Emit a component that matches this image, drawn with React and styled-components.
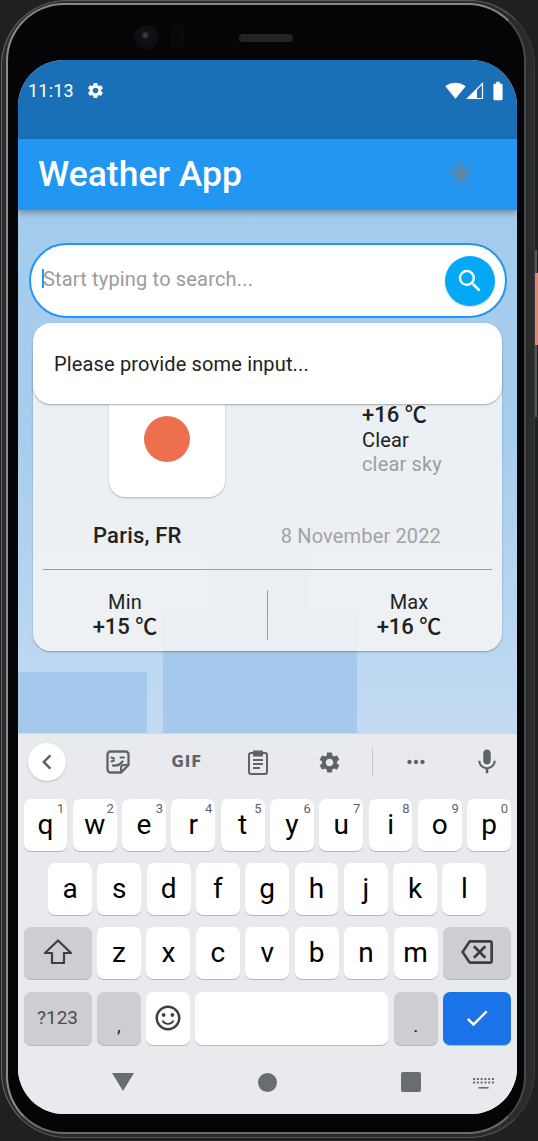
import styled, { createGlobalStyle } from 'styled-components';
import {
  MdSettings, MdSearch, MdSignalWifi4Bar, MdBatteryFull, MdWbSunny, MdChevronLeft,
  MdMic, MdMoreHoriz, MdOutlineBackspace, MdCheck, MdOutlineSentimentSatisfiedAlt,
} from 'react-icons/md';

const GlobalStyle = createGlobalStyle`
  html, body {
    margin: 0;
    background: #1f2021;
    overflow: hidden;
  }
  * { box-sizing: border-box; }
`;

const Page = styled.div`
  width: 538px;
  height: 1141px;
  position: relative;
  overflow: hidden;
  padding: 0 3px 3px 1px;
  font-family: Roboto, "Noto Sans CJK SC", sans-serif;
`;

const Shell = styled.div`
  height: 1138px;
  background: #2a2b2d;
  border: 1px solid;
  border-color: #5c5d60 #3a3b3d #55565a #66676a;
  border-radius: 66px;
  padding: 2px 8px 3px 4px;
`;

const Bezel = styled.div`
  height: 100%;
  background: #050507;
  border: 2px solid;
  border-color: #85868a #47484b #6a6b6e #8a8b8e;
  border-radius: 58px;
  padding: 0 7px 0 10px;
  display: flex;
  flex-direction: column;
`;

const Notch = styled.div`
  height: 55px;
  flex: none;
  display: flex;
  align-items: center;
  padding: 10px 0 0 116px;
`;

const Camera = styled.div`
  width: 25px;
  height: 25px;
  border-radius: 50%;
  background: radial-gradient(circle at 45% 40%, #3a3c4c 0 1.5px, #111217 4px, #0a0a0e 100%);
  border: 1px solid #0f0f13;
`;

const Sensor = styled.div`
  width: 12px;
  height: 25px;
  margin-left: 12px;
  border-radius: 5px;
  background: #08080b;
  border: 1px solid #0e0e11;
`;

const Speaker = styled.div`
  width: 54px;
  height: 8px;
  margin-left: 56px;
  border-radius: 4px;
  background: repeating-linear-gradient(90deg, #262628 0 2px, #1d1d1f 2px 3px);
`;

const SideRail = styled.div`
  position: absolute;
  right: 1px;
  top: 250px;
  width: 2px;
  height: 167px;
  background: #55565a;
`;

const SideButton = styled.div`
  position: absolute;
  right: 0;
  top: 273px;
  width: 3px;
  height: 72px;
  background: #e8826a;
`;

const Screen = styled.div`
  flex: 1;
  min-height: 0;
  display: flex;
  flex-direction: column;
  border-radius: 46px;
  overflow: hidden;
  margin-bottom: 18px;
  background: #e8eaed;
`;

const StatusBar = styled.div`
  height: 79px;
  flex: none;
  background: #1a70b7;
  color: #fff;
  display: flex;
  align-items: center;
  padding: 0 8px 18px 10px;
  font-size: 18px;
  letter-spacing: 0.2px;
  svg { display: block; }
`;

const StatusIcons = styled.div`
  margin-left: auto;
  display: flex;
  align-items: center;
`;

const AppBar = styled.header`
  height: 71px;
  flex: none;
  background: #2196f3;
  display: flex;
  align-items: center;
  justify-content: space-between;
  padding: 0 41px 2px 20px;
  box-shadow: 0 3px 6px rgba(0, 0, 0, 0.3);
  position: relative;
  z-index: 2;
`;

const Title = styled.h1`
  margin: 0;
  color: #fff;
  font-size: 35.5px;
  font-weight: 500;
`;

const Body = styled.main`
  flex: 1;
  min-height: 0;
  padding: 33px 0 0;
  background:
    linear-gradient(#a5c9ed, #a5c9ed) 0 462px / 129px 61px no-repeat,
    linear-gradient(#a5c9ed, #a5c9ed) 145px 400px / 194px 123px no-repeat,
    linear-gradient(#a9ccee, #a9ccee) 187px 280px / 105px 120px no-repeat,
    linear-gradient(180deg, #a3cbec 0%, #a8ceee 45%, #bcd7f0 85%, #c3dbf2 100%);
`;

const SearchWrap = styled.div`
  position: relative;
  margin: 0 10px 0 11px;
`;

const SearchField = styled.div`
  height: 75px;
  background: #fff;
  border: 2.5px solid #2196f3;
  border-radius: 38px;
  display: flex;
  align-items: center;
  padding: 0 10px 0 11px;
`;

const Cursor = styled.span`
  width: 2px;
  height: 19px;
  margin-bottom: 4px;
  background: #2196f3;
  flex: none;
  margin-right: -1px;
`;

const Placeholder = styled.span`
  font-size: 20px;
  letter-spacing: 0.17px;
  margin-bottom: 4px;
  color: #9b9b9b;
  flex: 1;
`;

const SearchButton = styled.button`
  width: 50px;
  height: 50px;
  border: none;
  border-radius: 50%;
  background: #03a9f4;
  color: #fff;
  display: flex;
  align-items: center;
  justify-content: center;
  padding: 0;
  box-shadow: 0 1px 2px rgba(0, 0, 0, 0.2);
`;

const Suggestion = styled.div`
  position: absolute;
  left: 4px;
  right: 5px;
  top: 80px;
  height: 81px;
  background: #fff;
  border-radius: 18px;
  display: flex;
  align-items: center;
  padding-left: 21px;
  font-size: 20px;
  letter-spacing: 0.15px;
  color: #212121;
  box-shadow: 0 1px 2px rgba(0, 0, 0, 0.3);
  z-index: 1;
`;

const WeatherCard = styled.section`
  margin: 22px 15px 0;
  height: 311px;
  background: rgba(245, 245, 245, 0.87);
  border-radius: 18px;
  box-shadow: 0 1px 2px rgba(0, 0, 0, 0.3);
  color: #212121;
`;

const TopRow = styled.div`
  height: 157px;
  display: flex;
  align-items: flex-end;
  gap: 137px;
  padding-left: 76px;
`;

const ImageBox = styled.div`
  width: 116px;
  height: 147px;
  background: #fff;
  border-radius: 16px;
  box-shadow: 0 1px 2px rgba(0, 0, 0, 0.25);
  display: flex;
  align-items: flex-end;
  justify-content: center;
  padding-bottom: 35px;
`;

const SunDot = styled.div`
  width: 46px;
  height: 46px;
  border-radius: 50%;
  background: #ee6f4d;
  filter: blur(0.7px);
`;

const Conditions = styled.div`
  display: flex;
  flex-direction: column;
  padding-bottom: 21px;
`;

const Temp = styled.div`
  font-size: 22px;
  font-weight: 500;
  line-height: 26px;
  white-space: nowrap;
`;

const Line = styled.div`
  font-size: 20px;
  letter-spacing: 0.15px;
  line-height: 24px;
  color: ${(p) => (p.$muted ? '#9e9e9e' : '#212121')};
`;

const PlaceRow = styled.div`
  height: 72px;
  padding: 27px 61px 0 60px;
  display: flex;
  justify-content: space-between;
`;

const Place = styled.div`
  font-size: 22px;
  font-weight: 500;
  letter-spacing: 0.2px;
  line-height: 24px;
`;

const DateText = styled.div`
  font-size: 20px;
  letter-spacing: 0.15px;
  line-height: 24px;
  color: #a3a3a3;
`;

const Divider = styled.div`
  height: 1px;
  margin: 0 10px;
  background: #52b4e6;
`;

const StatsRow = styled.div`
  display: flex;
  justify-content: space-between;
  padding: 20px 61px 0 60px;
`;

const Stat = styled.div`
  width: 64px;
  display: flex;
  flex-direction: column;
  align-items: center;
  white-space: nowrap;
`;

const VLine = styled.div`
  width: 1px;
  height: 50px;
  background: #52b4e6;
`;

const Keyboard = styled.div`
  height: 380px;
  flex: none;
  background: #e8eaed;
  position: relative;
`;

const Toolbar = styled.div`
  height: 65px;
  padding: 0 0 9px 10px;
  display: grid;
  grid-template-columns: 38px 104px 34px 108px 34px 52px 36px 83px;
  align-items: center;
  color: #5f6368;
`;

const BackButton = styled.div`
  width: 38px;
  height: 38px;
  border-radius: 50%;
  background: #fff;
  box-shadow: 0 1px 2px rgba(0, 0, 0, 0.2);
  display: flex;
  align-items: center;
  justify-content: center;
`;

const Tool = styled.div`
  display: flex;
  justify-content: center;
  align-items: center;
  justify-self: ${(p) => (p.$end ? 'end' : 'center')};
  width: ${(p) => (p.$end ? '60px' : 'auto')};
`;

const GifLabel = styled.span`
  font-family: "DejaVu Sans", sans-serif;
  font-weight: 700;
  font-size: 15px;
  letter-spacing: 1px;
`;

const Separator = styled.div`
  width: 1px;
  height: 28px;
  background: #c6c8cc;
`;

const Keys = styled.div`
  display: flex;
  flex-direction: column;
  gap: 12px;
  padding: 0 6px 0 5.5px;
`;

const KeyRow = styled.div`
  display: flex;
  gap: 5.4px;
  height: ${(p) => (p.$last ? '53px' : '52px')};
  margin-top: ${(p) => (p.$last ? '1px' : '0')};
  padding: 0 ${(p) => (p.$inset ? '24.6px' : '0')};
`;

const Key = styled.div`
  position: relative;
  flex: ${(p) => (p.$w ? `0 0 ${p.$w}px` : '1 1 0')};
  min-width: 0;
  border-radius: 7px;
  background: ${(p) => (p.$primary ? '#1a73e8' : p.$alt ? '#ccced3' : '#fff')};
  color: ${(p) => (p.$primary ? '#fff' : p.$alt ? '#3c4043' : '#000')};
  box-shadow: 0 1px 0 #b4b7bc;
  display: flex;
  align-items: center;
  justify-content: center;
  font-size: 28px;
  padding-bottom: 2px;
`;

const Hint = styled.span`
  position: absolute;
  top: 2px;
  right: 3px;
  font-size: 13px;
  color: #5f6368;
`;

const SymbolLabel = styled.span`
  font-size: 19px;
  color: #4a4d51;
`;

const Punct = styled.span`
  font-size: 19px;
  line-height: 1;
  margin-top: 16px;
  color: #202124;
`;

const NavBar = styled.div`
  display: grid;
  grid-template-columns: 210px 78px 210px;
  align-items: center;
  justify-items: center;
  padding-top: 27px;
`;

const NavTriangle = styled.div`
  width: 0;
  height: 0;
  border-left: 11px solid transparent;
  border-right: 11px solid transparent;
  border-top: 18px solid #6a6d70;
`;

const NavCircle = styled.div`
  width: 19px;
  height: 19px;
  border-radius: 50%;
  background: #6a6d70;
`;

const NavSquare = styled.div`
  width: 20px;
  height: 20px;
  border-radius: 2px;
  background: #6a6d70;
`;

const KeyboardSwitch = styled.div`
  position: absolute;
  right: 23px;
  bottom: 25px;
  color: #6a6d70;
  svg { display: block; }
`;

const SignalIcon = () => (
  <svg width="18" height="18" viewBox="0 0 18 18">
    <path d="M16.5 1.5V16.5H1.5Z" fill="none" stroke="#fff" strokeWidth="1.2" />
    <path d="M11 7V16.5H1.5Z" fill="#fff" />
  </svg>
);

const StickerIcon = () => (
  <svg width="24" height="24" viewBox="0 0 24 24" fill="none" stroke="currentColor" strokeWidth="2.3">
    <path d="M4.5 1.5h15a3 3 0 0 1 3 3V15l-7.5 7.5H4.5a3 3 0 0 1-3-3v-15a3 3 0 0 1 3-3z" />
    <path d="M15 22.5V18a3 3 0 0 1 3-3h4.5" strokeWidth="2" />
    <path d="M5.5 7.5l2.5 1M5.5 11.5 8 10.5M14.5 7.5H18" strokeLinecap="round" strokeWidth="2" />
    <path d="M7 15.5c4 .5 7.5-1 9.5-4" strokeLinecap="round" />
  </svg>
);

const ClipboardIcon = () => (
  <svg width="22" height="26" viewBox="0 0 22 26" fill="none" stroke="currentColor" strokeWidth="2">
    <rect x="2" y="4" width="18" height="21" rx="2" />
    <path d="M7 2.5h8v4H7z" fill="currentColor" />
    <path d="M6 11h10M6 15h10M6 19h7" />
  </svg>
);

const ShiftIcon = () => (
  <svg width="30" height="30" viewBox="0 0 30 30" fill="none" stroke="#3c4043" strokeWidth="2.2" strokeLinejoin="round">
    <path d="M15 3.5 28 16h-7v10H9V16H2z" />
  </svg>
);

const KeyboardGlyph = () => (
  <svg width="21" height="11" viewBox="0 0 21 11" fill="currentColor">
    {[0, 1, 2, 3, 4, 5].map((i) => <rect key={i} x={i * 3.8} y="0" width="2" height="2" />)}
    {[0, 1, 2, 3, 4, 5].map((i) => <rect key={i} x={i * 3.8} y="3.5" width="2" height="2" />)}
    <rect x="5.5" y="9" width="10" height="1.6" />
  </svg>
);

const ROW_ONE = [['q', 1], ['w', 2], ['e', 3], ['r', 4], ['t', 5], ['y', 6], ['u', 7], ['i', 8], ['o', 9], ['p', 0]];
const ROW_TWO = ['a', 's', 'd', 'f', 'g', 'h', 'j', 'k', 'l'];
const ROW_THREE = ['z', 'x', 'c', 'v', 'b', 'n', 'm'];

const App = () => {
  return (
    <Page>
      <GlobalStyle />
      <SideRail />
      <SideButton />
      <Shell>
        <Bezel>
          <Notch>
            <Camera />
            <Sensor />
            <Speaker />
          </Notch>
          <Screen>
            <StatusBar>
              <span>11:13</span>
              <MdSettings size={19} style={{ marginLeft: 12 }} />
              <StatusIcons>
                <MdSignalWifi4Bar size={21} />
                <SignalIcon />
                <MdBatteryFull size={22} style={{ marginLeft: 3 }} />
              </StatusIcons>
            </StatusBar>
            <AppBar>
              <Title>Weather App</Title>
              <MdWbSunny size={30} color="#5a87a8" />
            </AppBar>
            <Body>
              <SearchWrap>
                <SearchField>
                  <Cursor />
                  <Placeholder>Start typing to search...</Placeholder>
                  <SearchButton><MdSearch size={30} /></SearchButton>
                </SearchField>
                <Suggestion>Please provide some input...</Suggestion>
              </SearchWrap>
              <WeatherCard>
                <TopRow>
                  <ImageBox><SunDot /></ImageBox>
                  <Conditions>
                    <Temp>+16 ℃</Temp>
                    <Line>Clear</Line>
                    <Line $muted>clear sky</Line>
                  </Conditions>
                </TopRow>
                <PlaceRow>
                  <Place>Paris, FR</Place>
                  <DateText>8 November 2022</DateText>
                </PlaceRow>
                <Divider />
                <StatsRow>
                  <Stat>
                    <Line>Min</Line>
                    <Temp>+15 ℃</Temp>
                  </Stat>
                  <VLine />
                  <Stat>
                    <Line>Max</Line>
                    <Temp>+16 ℃</Temp>
                  </Stat>
                </StatsRow>
              </WeatherCard>
            </Body>
            <Keyboard>
              <Toolbar>
                <BackButton><MdChevronLeft size={30} /></BackButton>
                <Tool><StickerIcon /></Tool>
                <Tool><GifLabel>GIF</GifLabel></Tool>
                <Tool><ClipboardIcon /></Tool>
                <Tool><MdSettings size={25} /></Tool>
                <Tool><Separator /></Tool>
                <Tool><MdMoreHoriz size={26} /></Tool>
                <Tool $end><MdMic size={30} /></Tool>
              </Toolbar>
              <Keys>
                <KeyRow>
                  {ROW_ONE.map(([k, n]) => (
                    <Key key={k}>{k}<Hint>{n}</Hint></Key>
                  ))}
                </KeyRow>
                <KeyRow $inset>
                  {ROW_TWO.map((k) => <Key key={k}>{k}</Key>)}
                </KeyRow>
                <KeyRow>
                  <Key $w={68} $alt><ShiftIcon /></Key>
                  {ROW_THREE.map((k) => <Key key={k}>{k}</Key>)}
                  <Key $w={68} $alt><MdOutlineBackspace size={32} /></Key>
                </KeyRow>
                <KeyRow $last>
                  <Key $w={68} $alt><SymbolLabel>?123</SymbolLabel></Key>
                  <Key $alt><Punct>,</Punct></Key>
                  <Key><MdOutlineSentimentSatisfiedAlt size={30} color="#3c4043" /></Key>
                  <Key $w={193} />
                  <Key $alt><Punct>.</Punct></Key>
                  <Key $w={68} $primary><MdCheck size={28} /></Key>
                </KeyRow>
              </Keys>
              <NavBar>
                <NavTriangle />
                <NavCircle />
                <NavSquare />
              </NavBar>
              <KeyboardSwitch><KeyboardGlyph /></KeyboardSwitch>
            </Keyboard>
          </Screen>
        </Bezel>
      </Shell>
    </Page>
  );
};

export default App;
